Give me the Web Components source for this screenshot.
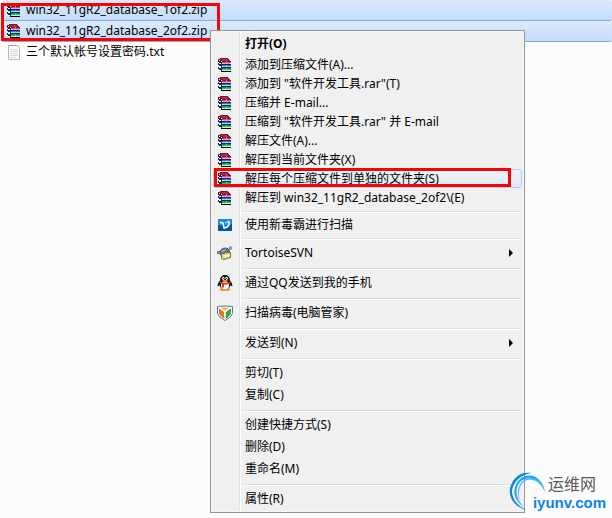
<!DOCTYPE html>
<html lang="zh-CN">
<head>
<meta charset="utf-8">
<title>Files</title>
<style>
html, body {
  margin: 0;
  min-height: 100vh;
}
body {
  position: relative;
  background: #fcfcfc;
  color: #000;
  font: 12px/16px "Noto Sans", "Noto Sans CJK SC", sans-serif;
}
body > context-menu {
  position: absolute;
  top: 30px;
  left: 210px;
}
body > site-mark {
  position: absolute;
  right: 6px;
  bottom: 6px;
}
</style>
</head>
<body>
<file-list>
  <file-row selected icon="rar">win32_11gR2_database_1of2.zip</file-row>
  <file-row selected icon="rar">win32_11gR2_database_2of2.zip</file-row>
  <file-row icon="text">三个默认帐号设置密码.txt</file-row>
</file-list>

<context-menu>
  <menu-item strong>打开(O)</menu-item>
  <menu-item compact icon="rar">添加到压缩文件(A)...</menu-item>
  <menu-item compact icon="rar">添加到 "软件开发工具.rar"(T)</menu-item>
  <menu-item compact icon="rar">压缩并 E-mail...</menu-item>
  <menu-item compact icon="rar">压缩到 "软件开发工具.rar" 并 E-mail</menu-item>
  <menu-item compact icon="rar">解压文件(A)...</menu-item>
  <menu-item compact icon="rar">解压到当前文件夹(X)</menu-item>
  <menu-item compact icon="rar" active>解压每个压缩文件到单独的文件夹(S)</menu-item>
  <menu-item compact icon="rar">解压到 win32_11gR2_database_2of2\(E)</menu-item>
  <menu-line></menu-line>
  <menu-item compact icon="duba">使用新毒霸进行扫描</menu-item>
  <menu-line></menu-line>
  <menu-item icon="tortoise" submenu>TortoiseSVN</menu-item>
  <menu-line></menu-line>
  <menu-item icon="qq">通过QQ发送到我的手机</menu-item>
  <menu-line></menu-line>
  <menu-item icon="shield">扫描病毒(电脑管家)</menu-item>
  <menu-line></menu-line>
  <menu-item submenu>发送到(N)</menu-item>
  <menu-line></menu-line>
  <menu-item>剪切(T)</menu-item>
  <menu-item>复制(C)</menu-item>
  <menu-line></menu-line>
  <menu-item>创建快捷方式(S)</menu-item>
  <menu-item>删除(D)</menu-item>
  <menu-item>重命名(M)</menu-item>
  <menu-line></menu-line>
  <menu-item>属性(R)</menu-item>
</context-menu>

<site-mark>
  <span>运维网</span>
  <a slot="link" href="#">iyunv.com</a>
</site-mark>

<script>
const icons = {
  rar: `<g shape-rendering="crispEdges">
    <path fill="#781830" d="M1 2h2V1h8v1h1v1h1v1h1v1H5V4H3V3H1z"/>
    <path fill="#a83058" d="M4 2h6v1h1v1H6V3H4z"/>
    <path fill="#e83888" d="M5 5h9v1H5z"/>
    <path fill="#f8a0c0" d="M6 6h7v1H6z"/>
    <path fill="#401020" d="M1 3h1v1h2v1h1v2H4V6H2V5H1z"/>
    <path fill="#fff" d="M1 5h1v1h2v1H2V6H1zm0 4h1v1h2v1H2v-1H1zm0 3h1v1h2v1H2v-1H1z"/>
    <path fill="#102080" d="M1 6h1v1h12v1H5v2H4V9H2V8H1z"/>
    <path fill="#3868d8" d="M5 8h9v1H5z"/>
    <path fill="#80e0f8" d="M6 9h8v1H6z"/>
    <path fill="#083828" d="M1 10h1v1h2v-1h10v1H5v3H4v-1H2v-1H1z"/>
    <path fill="#08905c" d="M5 11h9v1H5z"/>
    <path fill="#20c080" d="M5 12h9v1H5z"/>
    <path fill="#c0f8d8" d="M6 13h8v1H6z"/>
    <path fill="#000" d="M4 14h10v1H4z"/>
    <path fill="#c89850" d="M9 4h1v2H9zm0 4h1v1H9zm0 3h1v2H9z"/>
  </g>`,
  text: `<path fill="#fcfcfc" stroke="#b4b8ba" d="M2.500 1.500h9l2 2v12h-11z"/>
    <path stroke="#d4d8da" d="M4 5.500h8m-8 2h8m-8 2h8m-8 2h8m-8 2h6"/>
    <path stroke="#8c9294" stroke-dasharray="1 1" d="M3 1.500h10"/>`,
  duba: `<path fill="#0858a0" d="M1 2h14v12H1z"/>
    <path fill="#1c8cd8" d="M1 2h14v5Q8 10 1 8z"/>
    <path fill="none" stroke="#fff" stroke-width="1.600" stroke-linejoin="round" d="M3 5.500l3 .5 1 5q4-.500 5-3.500.500-2-.500-3.500"/>
    <path stroke="#d0f0ff" d="M8 6l4-2"/>`,
  tortoise: `<path fill="#60788c" stroke="#485c6c" d="M2.500 8q1-5 6-5 3 0 4 3v5h-8z"/>
    <path fill="#9cb0c0" d="M4 6.500q2-2.500 5-2.500v1L5 7.500z"/>
    <path fill="#8c9890" stroke="#606c64" d="M.500 6.500h3v2h-3z"/>
    <path fill="#e0cc78" stroke="#806c38" d="M4.500 8.500h3l1-1h5v5l-7 2-2-1z"/>
    <path fill="#f8eebc" d="M6 10l7-1-1 3-5 1z"/>
    <path fill="#b8e0f0" stroke="#4888b0" d="M12 4l1-2.500 2 1-1 2z"/>`,
  qq: `<ellipse cx="8" cy="14.500" rx="5.500" ry="1.500" fill="#f0a020"/>
    <path fill="#141414" d="M8 0C4.500 0 3 2.500 3 5.500Q.500 8 .500 11q1 1 2-1 1 4.500 5.500 4.500t5.500-4.500q1 2 2 1 0-3-2.500-5.500C13 2.500 11.500 0 8 0z"/>
    <ellipse cx="8" cy="10.500" rx="4" ry="4" fill="#fff"/>
    <ellipse cx="6.300" cy="3.300" rx="1.200" ry="1.600" fill="#fff"/>
    <ellipse cx="9.700" cy="3.300" rx="1.200" ry="1.600" fill="#fff"/>
    <circle cx="6.600" cy="3.500" r=".5"/>
    <circle cx="9.400" cy="3.500" r=".5"/>
    <ellipse cx="8" cy="5.800" rx="2.800" ry=".9" fill="#f8a820"/>
    <path fill="#e03020" d="M3 6.500q5 2.500 10 0l.5 2q-4 1.500-6.500 1v3H5V9q-2-.5-2.500-1z"/>`,
  shield: `<path fill="#fff" stroke="#5078a8" d="M.500 1.500q7.500-1 15 0v7q-1 4-7.500 7-6.500-3-7.500-7z"/>
    <path fill="#f07030" d="M2 3l5.500 4v7Q2.500 11 2 8z"/>
    <path fill="#38a048" d="M14 3L8.500 7v7q5-3 5.500-6z"/>
    <path fill="#f8b830" d="M3.500 2.500h9L8 6z"/>
    <path fill="none" stroke="#fff" stroke-width="1.200" d="M2.500 2.500L8 7l5.500-4.500M8 7v7"/>`
};

class UiIcon extends HTMLElement {
  constructor() {
    super();
    this.attachShadow({ mode: "open" });
  }
  connectedCallback() {
    this.shadowRoot.innerHTML = `<style>
      :host { display: block; flex: none; width: 16px; height: 16px; }
      svg { display: block; width: 100%; height: 100%; }
    </style>
    <svg viewBox="0 0 16 16" aria-hidden="true">${icons[this.getAttribute("name")] || ""}</svg>`;
  }
}
customElements.define("ui-icon", UiIcon);

// red frame drawn over whatever it is placed in
class MarkFrame extends HTMLElement {
  constructor() {
    super();
    this.attachShadow({ mode: "open" });
    this.shadowRoot.innerHTML = `<style>
      :host {
        display: block;
        position: absolute;
        box-sizing: border-box;
        border: 3px solid #f00;
        pointer-events: none;
      }
    </style>`;
  }
}
customElements.define("mark-frame", MarkFrame);

class FileList extends HTMLElement {
  constructor() {
    super();
    this.attachShadow({ mode: "open" });
    this.shadowRoot.innerHTML = `<style>
      :host { display: block; position: relative; padding-left: 2px; }
      mark-frame { top: 3px; left: 1px; width: 219px; height: 38px; }
    </style>
    <slot></slot>
    <mark-frame></mark-frame>`;
  }
}
customElements.define("file-list", FileList);

class FileRow extends HTMLElement {
  constructor() {
    super();
    this.attachShadow({ mode: "open" });
  }
  connectedCallback() {
    this.shadowRoot.innerHTML = `<style>
      :host {
        display: flex;
        align-items: center;
        gap: 4px;
        box-sizing: border-box;
        height: 21px;
        padding-left: 4px;
        border-bottom: 1px solid transparent;
        white-space: nowrap;
      }
      :host([selected]) {
        background: linear-gradient(#dceafc, #c4dcfc);
        border-color: #84acdd;
        border-radius: 2px;
      }
    </style>
    <ui-icon name="${this.getAttribute("icon")}"></ui-icon>
    <span><slot></slot></span>`;
  }
}
customElements.define("file-row", FileRow);

class ContextMenu extends HTMLElement {
  constructor() {
    super();
    this.attachShadow({ mode: "open" });
    this.shadowRoot.innerHTML = `<style>
      :host {
        display: block;
        box-sizing: border-box;
        min-width: 315px;
        padding: 1px;
        background: #f5f5f5;
        border: 1px solid #979797;
      }
      div {
        padding: 1px;
        background: linear-gradient(90deg, #f0f0f0 27px, #e2e3e3 27px 28px, #fff 28px 29px, #f0f0f0 29px);
      }
    </style>
    <div role="menu"><slot></slot></div>`;
  }
}
customElements.define("context-menu", ContextMenu);

class MenuItem extends HTMLElement {
  constructor() {
    super();
    this.attachShadow({ mode: "open" });
  }
  connectedCallback() {
    this.shadowRoot.innerHTML = `<style>
      :host { display: block; position: relative; }
      button {
        display: flex;
        align-items: center;
        gap: 12px;
        box-sizing: border-box;
        width: 100%;
        height: 22px;
        padding: 0 8px 0 3px;
        border: 1px solid transparent;
        border-radius: 3px;
        background: none;
        color: inherit;
        font: inherit;
        text-align: left;
        white-space: nowrap;
      }
      :host([compact]) button { height: 19px; }
      :host([strong]) button { font-weight: bold; }
      :host([active]) button {
        border-color: #aecff7;
        background: linear-gradient(rgba(240, 244, 250, .8), rgba(222, 232, 246, .8));
      }
      span { flex: 1; }
      .arrow { width: 4px; height: 8px; }
      mark-frame { top: -1px; left: 1px; right: 11px; height: 19px; }
    </style>
    <button type="button" role="menuitem">
      <ui-icon name="${this.getAttribute("icon") || ""}"></ui-icon>
      <span><slot></slot></span>
      ${this.hasAttribute("submenu") ? `<svg class="arrow" viewBox="0 0 4 8"><path d="M0 0l4 4-4 4z"/></svg>` : ""}
    </button>
    ${this.hasAttribute("active") ? "<mark-frame></mark-frame>" : ""}`;
  }
}
customElements.define("menu-item", MenuItem);

class MenuLine extends HTMLElement {
  constructor() {
    super();
    this.attachShadow({ mode: "open" });
    this.shadowRoot.innerHTML = `<style>
      :host { display: block; padding: 4px 0 2px 28px; }
      div { height: 1px; background: #e0e0e0; border-bottom: 1px solid #fff; }
    </style>
    <div role="separator"></div>`;
  }
}
customElements.define("menu-line", MenuLine);

class SiteMark extends HTMLElement {
  constructor() {
    super();
    this.attachShadow({ mode: "open" });
    this.shadowRoot.innerHTML = `<style>
      :host { display: grid; justify-items: end; }
      svg {
        position: absolute;
        right: 58px;
        bottom: 1px;
        width: 40px;
        height: 40px;
      }
      .name {
        padding-right: 10px;
        color: #58595b;
        font-size: 16px;
        line-height: 20px;
      }
      ::slotted(a) {
        position: relative;
        color: #0c86dc;
        font: bold 15px/18px "Liberation Sans", sans-serif;
        text-decoration: none;
      }
    </style>
    <svg viewBox="0 0 40 40" aria-hidden="true">
      <path fill="#0c84dc" d="M19 39C4 36-2 22 4 12 8 4 15 1 23 2 12 4 5 11 4 20c0 8 5 15 15 19z"/>
      <path fill="#20a8f0" d="M16 36C5 29 4 18 10 10 19 0 34 4 37 21 32 9 21 4 13 10 6 16 7 28 16 36z"/>
      <path fill="#50c0f8" d="M13 31C8 24 9 14 16 9c7-4 16-1 20 9-5-8-13-11-19-8-6 4-8 13-4 21z"/>
    </svg>
    <div class="name"><slot></slot></div>
    <slot name="link"></slot>`;
  }
}
customElements.define("site-mark", SiteMark);
</script>
</body>
</html>
